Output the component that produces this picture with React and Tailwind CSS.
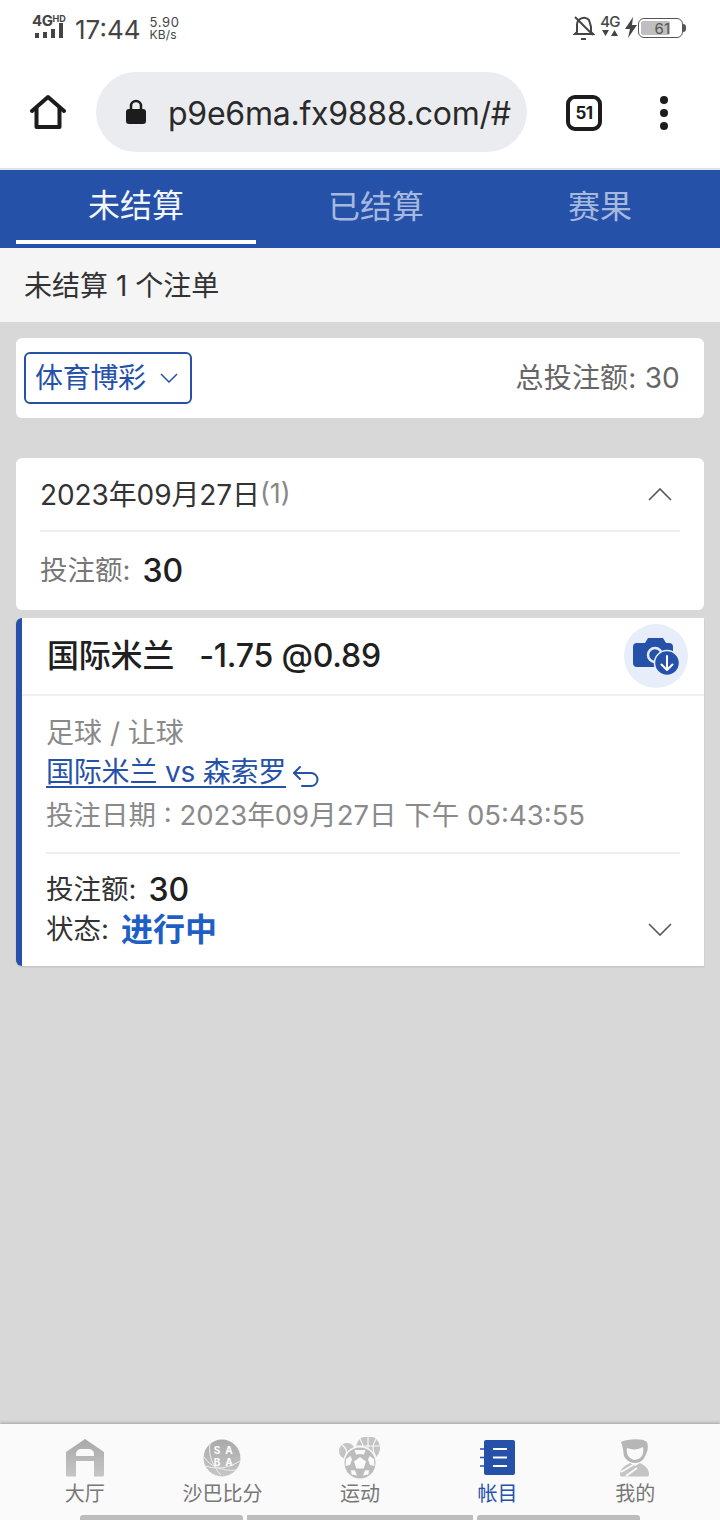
import React from 'react';

const font = 'font-["Inter","Noto_Sans_CJK_SC",sans-serif]';

// thin wide chevron, as in the page's dropdowns
function Chevron({ up, className }) {
  return (
    <svg width="24" height="13" viewBox="0 0 24 13" fill="none" stroke="currentColor" strokeWidth="1.6" className={className}>
      <path d={up ? 'M1 12 L12 1 L23 12' : 'M1 1 L12 12 L23 1'} />
    </svg>
  );
}

function StatusBar() {
  return (
    <div className="h-[60px] flex items-start justify-between pl-[32px] pr-[32px] pt-[14px] text-[#444]">
      <div className="flex items-start">
        <div className="w-[34px] flex flex-col">
          <div className="flex items-start h-[13px] leading-none">
            <span className="text-[15px] font-bold leading-[14px] tracking-[-0.5px]">4G</span>
            <span className="text-[9px] font-bold leading-[9px]">HD</span>
          </div>
          <svg width="32" height="15" viewBox="0 0 32 15" className="-mt-[4px]">
            <rect x="3" y="10" width="4" height="5" fill="#444" />
            <rect x="11" y="9" width="4" height="6" fill="#444" />
            <rect x="19" y="6" width="4" height="9" fill="#444" />
            <rect x="27" y="0" width="4" height="15" fill="#444" />
          </svg>
        </div>
        <span className="ml-[9px] text-[26px] leading-[32px]">17:44</span>
        <div className="ml-[9px] mt-[2px] flex flex-col leading-none">
          <span className="text-[13px] leading-[13px] tracking-[0.7px]">5.90</span>
          <span className="text-[12px] leading-[11px] tracking-[0.2px]">KB/s</span>
        </div>
      </div>
      <div className="flex items-start mr-[2px]">
        <svg width="22" height="26" viewBox="0 0 22 26" fill="none" stroke="#444" strokeWidth="2" className="mt-[1px]">
          <path d="M4 17 V10 a7 7 0 0 1 12 -5 l2 7 v5 l2 2 H2 Z" />
          <path d="M8 24 h5" />
          <path d="M2 2 L20 20" />
        </svg>
        <div className="ml-[5px] flex flex-col items-center w-[20px]">
          <span className="text-[15px] font-medium leading-[15px] tracking-[-0.8px]">4G</span>
          <svg width="16" height="8" viewBox="0 0 16 8" fill="#444">
            <path d="M0 1 H7 L3.5 7 Z M9 7 H16 L12.5 1 Z" />
          </svg>
        </div>
        <svg width="14" height="22" viewBox="0 0 14 22" fill="#444" className="ml-[4px] mt-[3px]">
          <path d="M9 0 L1 12 H6 L4 21 L13 8 H8 Z" />
        </svg>
        <div className="w-[45px] h-[20px] rounded-[6px] border border-[#555] p-[2px] flex mt-[4px]">
          <div className="w-[29px] bg-[#bfbfbf] rounded-[2px] flex items-center justify-end">
            <span className="text-[15px] leading-none text-[#555]">61</span>
          </div>
        </div>
        <div className="w-[3px] h-[8px] bg-[#555] mt-[10px] rounded-r-sm" />
      </div>
    </div>
  );
}

function BrowserBar() {
  return (
    <div className="h-[110px] flex items-start border-b-2 border-[#e0e4e8] pl-[30px]">
      <svg width="36" height="36" viewBox="0 0 36 36" fill="none" stroke="#1c1c1c" strokeWidth="4" strokeLinejoin="round" strokeLinecap="round" className="mt-[34px]">
        <path d="M2 17 L18 3 L34 17" />
        <path d="M6.5 14 V33 H29.5 V14" />
      </svg>
      <div className="ml-[30px] mt-[12px] w-[431px] h-[80px] rounded-full bg-[#ebecf0] flex items-center pl-[30px]">
        <svg width="20" height="26" viewBox="0 0 20 26" className="shrink-0">
          <path d="M5 11 V7 a5 5 0 0 1 10 0 V11" fill="none" stroke="#1c1c1c" strokeWidth="2.5" />
          <rect x="0" y="10" width="20" height="15" rx="3" fill="#1c1c1c" />
        </svg>
        <span className="ml-[22px] pt-[3px] text-[32px] tracking-[-0.25px] text-[#2a2a2a] whitespace-nowrap">p9e6ma.fx9888.com/#</span>
      </div>
      <div className="ml-[39px] mt-[35px] w-[36px] h-[36px] rounded-[9px] border-[4px] border-[#1c1c1c] flex items-center justify-center">
        <span className="text-[17px] font-bold text-[#1c1c1c] leading-none tracking-[-0.5px]">51</span>
      </div>
      <div className="ml-[58px] mt-[36px] flex flex-col gap-[5px]">
        <div className="w-[8px] h-[8px] rounded-full bg-[#1c1c1c]" />
        <div className="w-[8px] h-[8px] rounded-full bg-[#1c1c1c]" />
        <div className="w-[8px] h-[8px] rounded-full bg-[#1c1c1c]" />
      </div>
    </div>
  );
}

function Tabs() {
  return (
    <div className="h-[78px] bg-[#2551a8] flex text-[32px] px-[16px]">
      <div className="w-[240px] flex flex-col items-center">
        <span className="flex-1 flex items-center pt-[2px] text-[#f2f5fb]">未结算</span>
        <div className="w-full h-[4px] bg-white mb-[4px]" />
      </div>
      <div className="w-[240px] flex items-center justify-center pb-[4px] text-[#a5b9de]">已结算</div>
      <div className="w-[208px] flex items-center justify-center pb-[4px] text-[#a5b9de]">赛果</div>
    </div>
  );
}

function Bet() {
  return (
    <div className="mt-[8px] bg-white rounded-l-[6px] border-l-[6px] border-[#2551a8] shadow-[0_1px_2px_rgba(0,0,0,0.12)]">
      <div className="h-[78px] pl-[25px] pr-[16px] flex items-center justify-between border-b-2 border-[#f0f0f0]">
        <span className="text-[32px] font-medium tracking-[-0.2px] text-[#202020] whitespace-pre">国际米兰   -1.75 @0.89</span>
        <div className="w-[64px] h-[64px] rounded-full bg-[#e7eef9] flex items-center justify-center">
          <svg width="56" height="56" viewBox="0 0 56 56">
            <path d="M9 15 h8 l3 -5 h15 l3 5 h3 a4 4 0 0 1 4 4 v20 H9 a4 4 0 0 1 -4 -4 V19 a4 4 0 0 1 4 -4 Z" fill="#2551a8" />
            <circle cx="27" cy="27" r="7" fill="none" stroke="#e7eef9" strokeWidth="2.5" />
            <circle cx="39" cy="35" r="12.5" fill="#2551a8" stroke="#e7eef9" strokeWidth="1.5" />
            <path d="M39 28 V42 M33.5 36.5 L39 42 L44.5 36.5" fill="none" stroke="#fff" strokeWidth="2" strokeLinecap="round" strokeLinejoin="round" />
          </svg>
        </div>
      </div>
      <div className="ml-[24px] mr-[24px] border-b-2 border-[#eeeeee] pt-[17px] pb-[17px]">
        <div className="text-[28px] leading-[40px] text-[#8a8a8a]">足球 / 让球</div>
        <div className="flex items-start h-[42px]">
          <span className="text-[28px] leading-[28px] pt-[5px] tracking-[-0.2px] text-[#2551a8] border-b-2 border-[#2551a8]">国际米兰 vs 森索罗</span>
          <svg width="28" height="24" viewBox="0 0 28 24" fill="none" stroke="#2551a8" strokeWidth="2" strokeLinecap="round" strokeLinejoin="round" className="ml-[6px] mt-[12px]">
            <path d="M8 2 L2 8 L8 14" />
            <path d="M2 8 H19 a6.5 6.5 0 0 1 0 13 H10" />
          </svg>
        </div>
        <div className="text-[27.5px] leading-[40px] text-[#8a8a8a]">投注日期 : 2023年09月27日 下午 05:43:55</div>
      </div>
      <div className="pl-[24px] pr-[32px] pt-[16px] pb-[16px] flex items-end justify-between">
        <div>
          <div className="flex items-center h-[40px]">
            <span className="text-[27.5px] text-[#333]">投注额:</span>
            <span className="ml-[12px] text-[32px] text-[#202020] font-medium">30</span>
          </div>
          <div className="flex items-center h-[40px]">
            <span className="text-[27.5px] text-[#333]">状态:</span>
            <span className="ml-[12px] text-[32px] font-bold text-[#1f5fc4]">进行中</span>
          </div>
        </div>
        <Chevron className="text-[#555] mb-[14px]" />
      </div>
    </div>
  );
}

function NavItem({ label, active, children }) {
  return (
    <div className="flex-1 flex flex-col items-center">
      <div className="h-[40px] flex items-center justify-center">{children}</div>
      <span className={`mt-[3px] text-[20px] leading-[26px] ${active ? 'text-[#2551a8]' : 'text-[#777]'}`}>{label}</span>
    </div>
  );
}

function BottomNav() {
  return (
    <div className="relative h-[96px] bg-[#fafafa] shadow-[0_-1px_3px_rgba(0,0,0,0.25)] flex px-[16px] pt-[14px]">
      <svg width="0" height="0" className="absolute">
        <defs>
          <linearGradient id="navGrey" x1="0" y1="0" x2="0" y2="1">
            <stop offset="0" stopColor="#a9a9a9" />
            <stop offset="1" stopColor="#c6c6c6" />
          </linearGradient>
        </defs>
      </svg>
      <NavItem label="大厅">
        <svg width="38" height="38" viewBox="0 0 38 38">
          <path fillRule="evenodd" fill="url(#navGrey)" d="M0 13 L19 0 L38 13 V36 a1.5 1.5 0 0 1 -1.5 1.5 H28 V22 H10 V37.5 H1.5 A1.5 1.5 0 0 1 0 36 Z M10 17 H28 V15 a5 5 0 0 0 -5 -5 H15 a5 5 0 0 0 -5 5 Z" />
        </svg>
      </NavItem>
      <NavItem label="沙巴比分">
        <svg width="38" height="38" viewBox="0 0 38 38">
          <circle cx="19" cy="19" r="18.5" fill="url(#navGrey)" />
          <path d="M1 18 C6 26 18 33 34 31 M7 5 C5 16 10 28 18 36 M3 27 C14 31 26 29 37 22" fill="none" stroke="#eee" strokeWidth="1" />
          <text x="14" y="15" fontSize="10" fontWeight="700" fill="#fff" textAnchor="middle">S</text>
          <text x="26" y="15" fontSize="10" fontWeight="700" fill="#fff" textAnchor="middle">A</text>
          <text x="14" y="27" fontSize="10" fontWeight="700" fill="#fff" textAnchor="middle">B</text>
          <text x="26" y="27" fontSize="10" fontWeight="700" fill="#fff" textAnchor="middle">A</text>
        </svg>
      </NavItem>
      <NavItem label="运动">
        <svg width="44" height="42" viewBox="0 0 44 42">
          <circle cx="9" cy="14" r="8" fill="#c4c4c4" />
          <path d="M4 8 C9 11 10 17 7 22" stroke="#fafafa" strokeWidth="1.2" fill="none" />
          <circle cx="30" cy="11" r="12" fill="#c4c4c4" />
          <path d="M18 9 H42 M30 0 V22 M22 2 C26 8 26 14 22 20 M38 2 C34 8 34 14 38 20" stroke="#fafafa" strokeWidth="1.1" fill="none" />
          <circle cx="22" cy="26" r="17" fill="#fafafa" />
          <circle cx="22" cy="26" r="15.5" fill="#bcbcbc" />
          <path d="M22 20 L28 24.5 L25.7 31.5 H18.3 L16 24.5 Z" fill="#fafafa" />
          <path d="M16.5 13 H27.5 L26 17.5 L22 17 L18 17.5 Z" fill="#fafafa" />
          <path d="M31.5 19 L36 22 L36.5 29 L32 28 L30 22.5 Z" fill="#fafafa" />
          <path d="M12.5 19 L8 22 L7.5 29 L12 28 L14 22.5 Z" fill="#fafafa" />
          <path d="M13 33 L17 33.5 L19 38.5 L13.5 37.5 Z" fill="#fafafa" />
          <path d="M31 33 L27 33.5 L25 38.5 L30.5 37.5 Z" fill="#fafafa" />
        </svg>
      </NavItem>
      <NavItem label="帐目" active>
        <svg width="36" height="36" viewBox="0 0 36 36">
          <rect x="4" y="0" width="31" height="35" rx="2" fill="#2551a8" />
          <path d="M0 9 H4 M0 17.5 H4 M0 26 H4" stroke="#2551a8" strokeWidth="1.5" />
          <path d="M13 9 H27 M13 17.5 H27 M13 26 H27" stroke="#fff" strokeWidth="1.8" />
        </svg>
      </NavItem>
      <NavItem label="我的">
        <svg width="30" height="38" viewBox="0 0 30 38">
          <path d="M1 3 C8 0 22 -1 27 3 C29 9 27 14 25 17 C24 21 20 24 15 24 C10 24 6 21 4 17 C3 12 3 7 1 3 Z" fill="#b6b6b6" />
          <path d="M7 9 C12 11 18 11 23 8 C24 13 23 20 15 21 C8 20 6 14 7 9 Z" fill="#fafafa" />
          <path d="M0 36 C0 30 4 27 10 24 L15 27 L20 24 C26 27 29 30 29 36 a2 2 0 0 1 -2 1.5 H2 A2 2 0 0 1 0 36 Z" fill="#c4c4c4" />
          <path d="M1 33 L13 26 M6 37 L17 29" stroke="#fafafa" strokeWidth="2" />
        </svg>
      </NavItem>
      <div className="absolute left-[80px] bottom-0 flex gap-[4px]">
        <div className="w-[163px] h-[5px] bg-[#bdbdbd] rounded-t-[3px]" />
        <div className="w-[226px] h-[5px] bg-[#bdbdbd]" />
        <div className="w-[163px] h-[5px] bg-[#bdbdbd] rounded-t-[3px]" />
      </div>
    </div>
  );
}

export default function App() {
  return (
    <div className={`w-[720px] h-[1520px] flex flex-col bg-white overflow-hidden ${font}`}>
      <StatusBar />
      <BrowserBar />
      <Tabs />
      <div className="h-[74px] bg-[#f5f5f5] flex items-center pl-[24px] pt-[2px] text-[28px] text-[#333]">未结算 1 个注单</div>
      <div className="flex-1 bg-[#d8d8d8] px-[16px] pt-[16px]">
        <div className="h-[80px] bg-white rounded-[6px] flex items-center justify-between pl-[8px] pr-[24px]">
          <div className="w-[168px] h-[52px] rounded-[6px] border-2 border-[#2551a8] flex items-center pl-[9px] text-[28px] tracking-[-0.3px] text-[#2551a8]">
            体育博彩
            <svg width="18" height="10" viewBox="0 0 18 10" fill="none" stroke="currentColor" strokeWidth="1.5" className="ml-[14px]">
              <path d="M1 1 L9 9 L17 1" />
            </svg>
          </div>
          <span className="text-[28px] tracking-[0.2px] text-[#666]">总投注额: 30</span>
        </div>
        <div className="mt-[40px] h-[152px] bg-white rounded-[6px] px-[24px]">
          <div className="h-[74px] flex items-center justify-between border-b-2 border-[#eeeeee]">
            <div className="flex items-center pt-[1px]">
              <span className="text-[28px] tracking-[-0.1px] text-[#333]">2023年09月27日</span>
              <span className="text-[27px] text-[#888]">(1)</span>
            </div>
            <Chevron up className="text-[#555] mr-[8px]" />
          </div>
          <div className="h-[76px] flex items-center pt-[1px]">
            <span className="text-[27.5px] text-[#777]">投注额:</span>
            <span className="ml-[12px] text-[32px] text-[#202020] font-medium">30</span>
          </div>
        </div>
        <Bet />
      </div>
      <BottomNav />
    </div>
  );
}
